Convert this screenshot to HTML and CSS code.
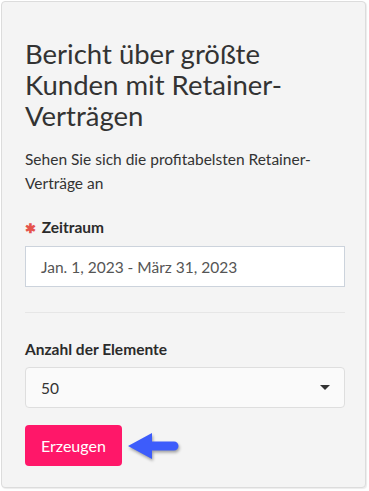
FILE: index.html
```html
<!DOCTYPE html>
<html lang="de">
<head>
  <meta charset="UTF-8" />
  <meta name="viewport" content="width=device-width, initial-scale=1.0" />
  <title>Bericht</title>
  <link rel="stylesheet" href="styles.css">
</head>
<body>
  <div class="card">
    <h1>Bericht über größte Kunden mit Retainer-Verträgen</h1>
    <p class="lead">Sehen Sie sich die profitabelsten Retainer-Verträge an</p>

    <label class="field-label"><span class="req">&#10033;</span> Zeitraum</label>
    <div class="date-input">Jan. 1, 2023 - März 31, 2023</div>

    <hr class="divider" />

    <label class="field-label">Anzahl der Elemente</label>
    <div class="select">
      <span>50</span>
      <span class="caret"></span>
    </div>

    <div class="actions">
      <button class="btn">Erzeugen</button>
      <svg class="arrow" width="60" height="34" viewBox="0 0 60 34">
        <path d="M2 17 L26 4 L26 12.5 L48 12.5 A4.5 4.5 0 0 1 48 21.5 L26 21.5 L26 30 Z" fill="#3d5cfb"/>
      </svg>
    </div>
  </div>
</body>
</html>
```

FILE: styles.css
```css
body {
  margin: 0;
  padding: 1px 3px 2px 1px;
  font-family: Lato, "Open Sans", sans-serif;
  color: #333;
  background: #fff;
}
.card {
  background: #f4f4f4;
  border: 1px solid #dcdcdc;
  border-radius: 4px;
  padding: 36px 20px 21px 23px;
  box-shadow: 1px 1px 1px rgba(0,0,0,0.08);
}
h1 {
  margin: 0 0 16px;
  font-size: 27.5px;
  font-weight: 400;
  line-height: 31px;
  color: #333;
}
.lead {
  margin: 0 0 22px;
  font-size: 15.5px;
  line-height: 24px;
  color: #333;
}
.field-label {
  display: block;
  font-size: 15.5px;
  font-weight: 700;
  line-height: 20px;
  margin-bottom: 8px;
  color: #2b2b2b;
}
.req {
  color: #e5534b;
  font-size: 13px;
  margin-right: 2px;
}
.date-input {
  box-sizing: border-box;
  height: 41px;
  background: #fff;
  border: 1px solid #ccd3dc;
  padding: 0 15px;
  display: flex;
  align-items: center;
  font-size: 15.5px;
  color: #555;
}
.divider {
  border: 0;
  border-top: 1px solid #e6e6e6;
  margin: 25px 0 26px;
}
.select {
  height: 41px;
  box-sizing: border-box;
  background: #fafafa;
  border: 1px solid #dedede;
  border-radius: 4px;
  padding: 0 14px 0 15px;
  display: flex;
  align-items: center;
  justify-content: space-between;
  font-size: 15.5px;
  color: #333;
}
.caret {
  width: 0;
  height: 0;
  border-left: 5px solid transparent;
  border-right: 5px solid transparent;
  border-top: 5px solid #333;
}
.actions {
  display: flex;
  align-items: center;
  gap: 4px;
  margin-top: 17px;
}
.btn {
  background: #ff1769;
  color: #fff;
  border: none;
  border-radius: 4px;
  height: 41px;
  padding: 0 16px;
  font-family: inherit;
  font-size: 16px;
}
.arrow {
  filter: drop-shadow(1px 2px 1.5px rgba(0,0,0,0.35));
}
```
